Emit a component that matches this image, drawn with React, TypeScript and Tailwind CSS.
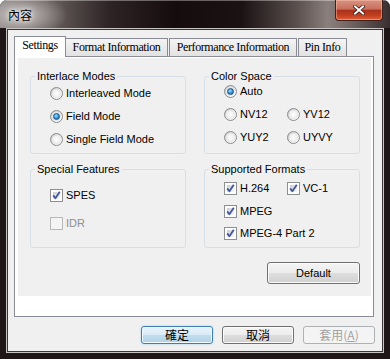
const Radio = ({ checked, label }: { checked?: boolean; label: string }) => (
  <div className="flex items-center gap-[3px] h-[13px]">
    <span className="relative w-[13px] h-[13px] shrink-0 rounded-full border border-[#8b8c8c] bg-[linear-gradient(135deg,#c4c5c6_0%,#eeeeee_60%,#ffffff_100%)]">
      <span className="absolute inset-[1px] rounded-full bg-[radial-gradient(circle_at_50%_50%,#ffffff_0%,#efefef_55%,#d2d2d2_100%)]" />
      {checked && (
        <span className="absolute left-[2px] top-[2px] w-[7px] h-[7px] rounded-full border border-[#1d5183] bg-[radial-gradient(circle_at_40%_35%,#a8e2fb_0%,#3ea0e2_45%,#0f5896_100%)]" />
      )}
    </span>
    <span>{label}</span>
  </div>
);

const Check = ({
  checked,
  disabled,
  label,
}: {
  checked?: boolean;
  disabled?: boolean;
  label: string;
}) => (
  <div
    className={`flex items-center gap-[3px] h-[13px] ${
      disabled ? "text-[#8f8f8f]" : ""
    }`}
  >
    <span
      className={`relative w-[13px] h-[13px] shrink-0 border ${
        disabled ? "border-[#b8b8b8] bg-[#f4f4f4]" : "border-[#8e8f8f] bg-white"
      }`}
    >
      {!disabled && (
        <span className="absolute inset-[2px] bg-[linear-gradient(135deg,#c9ccd1_0%,#e3e4e6_50%,#f6f6f6_100%)]" />
      )}
      {checked && (
        <svg
          viewBox="0 0 11 11"
          className="absolute left-0 top-0 w-[11px] h-[11px]"
        >
          <path
            d="M2.2 5.4 L4.4 8.2 L8.8 1.8"
            fill="none"
            stroke="#41579a"
            strokeWidth="1.8"
            strokeLinejoin="round"
          />
        </svg>
      )}
    </span>
    <span>{label}</span>
  </div>
);

const Group = ({
  title,
  className,
  children,
}: {
  title: string;
  className: string;
  children: React.ReactNode;
}) => (
  <fieldset className="border border-[#d5dfe5] rounded-[3px]">
    <legend className="ml-[4px] px-[2px] leading-[13px]">{title}</legend>
    <div className={`pl-[19px] flex flex-col ${className}`}>{children}</div>
  </fieldset>
);

const App = () => {
  return (
    <div className="w-[390px] h-[359px] rounded-t-[7px] bg-[#1f1618] flex flex-col overflow-hidden font-['Liberation_Sans',Arial,sans-serif] text-[11px] leading-[13px] text-black">
      {/* title bar */}
      <div className="h-[28px] shrink-0 flex justify-between items-start shadow-[inset_0_1px_0_rgba(255,255,255,0.35)] bg-[radial-gradient(ellipse_48px_22px_at_20px_15px,rgba(205,200,199,0.9)_0%,rgba(205,200,199,0)_100%),linear-gradient(90deg,#867f7e_0%,#6a6260_12%,#2e2325_28%,#150c0e_45%,#1b1214_62%,#5a4f4d_76%,#8b7f7d_84%,#7a6d6b_88%,#3a2e30_100%)]">
        <span className="ml-[8px] mt-[8px] text-[12px] leading-[14px] font-['Noto_Sans_CJK_TC',sans-serif] text-black [text-shadow:0_0_5px_#fff,0_0_8px_#eee]">
          內容
        </span>
        <button className="mr-[7px] w-[48px] h-[21px] rounded-b-[4px] border border-t-0 border-[#40201a] shadow-[inset_0_0_0_1px_rgba(255,200,180,0.45)] bg-[linear-gradient(180deg,#d89482_0%,#c86f5c_45%,#a9321d_52%,#c3401f_78%,#e0613a_100%)] flex items-center justify-center">
          <svg viewBox="0 0 12 10" className="w-[12px] h-[10px]">
            <path
              d="M2 1.5 L10 8.5 M10 1.5 L2 8.5"
              stroke="#3a1a14"
              strokeWidth="3.6"
              strokeLinecap="square"
            />
            <path
              d="M2 1.5 L10 8.5 M10 1.5 L2 8.5"
              stroke="#ffffff"
              strokeWidth="2"
              strokeLinecap="square"
            />
          </svg>
        </button>
      </div>

      {/* client area */}
      <div className="mx-[6px] mb-[6px] flex-1 border border-[#c9c4c4]">
        <div className="h-full border border-[#3c3436] bg-[#f0f0f0] flex flex-col">
          {/* tabs */}
          <div className="flex items-end ml-[6px] mt-[6px] font-['Liberation_Serif',serif] text-[12px] tracking-[-0.4px]">
            <div className="relative z-10 -mb-[1px] h-[21px] w-[52px] bg-white border border-b-0 border-[#898c95] flex items-center justify-center pb-[3px]">
              Settings
            </div>
            <div className="h-[18px] w-[102px] border border-l-0 border-b-0 border-[#898c95] bg-[linear-gradient(180deg,#f4f4f4,#e2e2e2)] flex items-center justify-center">
              Format Information
            </div>
            <div className="ml-[1px] h-[18px] w-[128px] border border-b-0 border-[#898c95] bg-[linear-gradient(180deg,#f4f4f4,#e2e2e2)] flex items-center justify-center">
              Performance Information
            </div>
            <div className="ml-[1px] h-[18px] w-[49px] border border-b-0 border-[#898c95] bg-[linear-gradient(180deg,#f4f4f4,#e2e2e2)] flex items-center justify-center">
              Pin Info
            </div>
          </div>

          {/* tab panel */}
          <div className="ml-[6px] w-[360px] h-[261px] border border-[#898c95] bg-white pl-[3px] pt-[1px]">
            <div className="w-[353px] h-[238px] bg-[#f0f0f0] pl-[12px] pt-[12px]">
              <div className="grid grid-cols-[156px_156px] gap-x-[18px] gap-y-[9px]">
                <Group title="Interlace Modes" className="pt-[4px] pb-[7px] gap-[10px]">
                  <Radio label="Interleaved Mode" />
                  <Radio checked label="Field Mode" />
                  <Radio label="Single Field Mode" />
                </Group>
                <Group title="Color Space" className="pt-[2px] pb-[7px] gap-[10px]">
                  <Radio checked label="Auto" />
                  <div className="flex">
                    <div className="w-[63px]">
                      <Radio label="NV12" />
                    </div>
                    <Radio label="YV12" />
                  </div>
                  <div className="flex">
                    <div className="w-[63px]">
                      <Radio label="YUY2" />
                    </div>
                    <Radio label="UYVY" />
                  </div>
                </Group>
                <Group title="Special Features" className="pt-[13px] gap-[15px]">
                  <Check checked label="SPES" />
                  <Check disabled label="IDR" />
                </Group>
                <Group title="Supported Formats" className="pt-[6px] pb-[7px]">
                  <div className="flex">
                    <div className="w-[63px]">
                      <Check checked label="H.264" />
                    </div>
                    <Check checked label="VC-1" />
                  </div>
                  <div className="mt-[10px]">
                    <Check checked label="MPEG" />
                  </div>
                  <div className="mt-[9px]">
                    <Check checked label="MPEG-4 Part 2" />
                  </div>
                </Group>
              </div>
              <div className="flex justify-end w-[330px] mt-[14px]">
                <button className="w-[93px] h-[22px] rounded-[3px] border border-[#707070] shadow-[inset_0_0_0_1px_#fbfbfb] bg-[linear-gradient(180deg,#f4f4f4_0%,#ececec_50%,#dedede_50%,#d0d0d0_100%)] text-[11px]">
                  Default
                </button>
              </div>
            </div>
          </div>

          {/* dialog buttons */}
          <div className="flex justify-end gap-[9px] pr-[7px] mt-[9px] font-['Noto_Sans_CJK_TC',sans-serif] text-[12px] leading-none">
            <button className="w-[72px] h-[18px] rounded-[3px] border border-[#3c7fb1] shadow-[0_0_2px_#8fd0f5,inset_0_0_0_1px_#f2f9fd] bg-[linear-gradient(180deg,#e8f3fa_0%,#d8ebf6_50%,#c2dced_50%,#b1d1e6_100%)]">
              確定
            </button>
            <button className="w-[72px] h-[18px] rounded-[3px] border border-[#707070] shadow-[inset_0_0_0_1px_#fbfbfb] bg-[linear-gradient(180deg,#f4f4f4_0%,#ececec_50%,#dedede_50%,#d0d0d0_100%)]">
              取消
            </button>
            <button className="w-[72px] h-[18px] rounded-[3px] border border-[#adb2b5] bg-[#f4f4f4] text-[#a3a3a3]">
              套用(<span className="underline">A</span>)
            </button>
          </div>
        </div>
      </div>
    </div>
  );
};

export default App;
